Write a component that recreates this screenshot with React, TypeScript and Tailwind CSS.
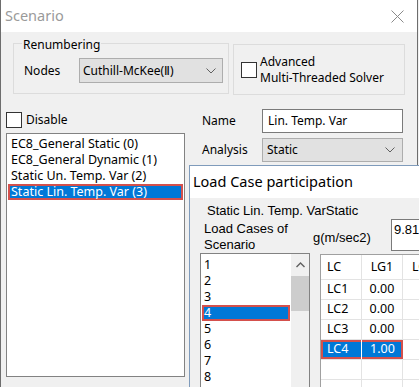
import React from 'react';

const Check = ({ className = '' }: { className?: string }) => (
  <div className={`w-[16px] h-[16px] bg-white border border-[#333333] shrink-0 ${className}`} />
);

const Chevron = () => (
  <svg width="10" height="6" viewBox="0 0 10 6" className="shrink-0">
    <path d="M0.5 0.5 L5 5 L9.5 0.5" fill="none" stroke="#606060" strokeWidth="1" />
  </svg>
);

const scenarios = [
  'EC8_General Static (0)',
  'EC8_General Dynamic (1)',
  'Static Un. Temp. Var (2)',
  'Static Lin. Temp. Var (3)',
];

const rows = [
  { lc: 'LC1', v: '0.00' },
  { lc: 'LC2', v: '0.00' },
  { lc: 'LC3', v: '0.00' },
  { lc: 'LC4', v: '1.00', sel: true },
];

export default function App() {
  return (
    <div className="w-[419px] h-[387px] overflow-hidden relative bg-[#f0f0f0] font-['Noto_Sans',sans-serif] text-[12px] text-black">
      {/* Scenario window */}
      <div className="w-[418px] h-[387px] border-x border-[#6d6d6d] bg-[#f0f0f0] flex flex-col">
        <div className="h-[32px] bg-white flex items-center justify-between pl-[4px] pr-[13px] shrink-0">
          <span className="text-[14.5px] text-[#9a9a9a]">Scenario</span>
          <svg width="13" height="13" viewBox="0 0 13 13">
            <path d="M0.5 0.5 L12.5 12.5 M12.5 0.5 L0.5 12.5" stroke="#8a8a8a" strokeWidth="1" />
          </svg>
        </div>

        {/* group boxes */}
        <div className="flex items-start pl-[12px] mt-[1px]">
          <fieldset className="w-[216px] min-w-0 h-[61px] border border-[#dcdcdc] pl-[10px] pr-[2px] shrink-0">
            <legend className="ml-[-2px] px-[1px] pt-[4px] leading-[16px]">Renumbering</legend>
            <div className="flex items-center mt-[5px]">
              <span className="w-[55px] shrink-0">Nodes</span>
              <div className="w-[144px] shrink-0 h-[25px] bg-[#e1e1e1] border border-[#adadad] flex items-center justify-between pl-[3px] pr-[6px]">
                <span>Cuthill-McKee(Ⅱ)</span>
                <Chevron />
              </div>
            </div>
          </fieldset>
          <div className="ml-[4px] mt-[11px] w-[172px] h-[51px] border border-[#dcdcdc] flex items-center pl-[7px] shrink-0">
            <Check />
            <div className="ml-[3px] leading-[16px]">
              <div>Advanced</div>
              <div>Multi-Threaded Solver</div>
            </div>
          </div>
        </div>

        {/* scenario list + name/analysis */}
        <div className="flex mt-[14px] pl-[5px]">
          <div className="w-[179px] shrink-0 flex flex-col pt-[3px]">
            <div className="flex items-center h-[16px]">
              <Check />
              <span className="ml-[4px]">Disable</span>
            </div>
            <div className="mt-[5px] h-[244px] bg-white border border-[#828282] pt-[2px] text-[12.5px]">
              {scenarios.map((s, i) =>
                i === 3 ? (
                  <div
                    key={s}
                    className="mx-[1px] h-[16px] leading-[16px] pl-[3px] bg-[#0078d7] text-white shadow-[inset_0_0_0_2px_#d4504c]"
                  >
                    {s}
                  </div>
                ) : (
                  <div key={s} className="h-[16px] leading-[16px] pl-[4px]">
                    {s}
                  </div>
                )
              )}
            </div>
          </div>
          <div className="ml-[17px] flex flex-col">
            <div className="flex items-center h-[24px]">
              <span className="w-[60px]">Name</span>
              <div className="w-[141px] h-[24px] bg-white border border-[#7a7a7a] flex items-center pl-[5px]">
                Lin. Temp. Var
              </div>
            </div>
            <div className="flex items-center h-[24px] mt-[5px]">
              <span className="w-[60px]">Analysis</span>
              <div className="w-[141px] h-[24px] bg-[#e1e1e1] border border-[#adadad] flex items-center justify-between pl-[4px] pr-[7px]">
                <span>Static</span>
                <Chevron />
              </div>
            </div>
          </div>
        </div>
      </div>

      {/* Load Case participation window (on top) */}
      <div className="absolute left-[189px] top-[165px] w-[270px] bottom-0 border-l border-t border-[#7f9bbb] bg-[#f0f0f0] flex flex-col">
        <div className="h-[32px] bg-white flex items-center pl-[3px] text-[14.5px] shrink-0">Load Case participation</div>
        <div className="font-['Liberation_Sans',Arial,sans-serif] text-[13px]">
          <div className="pl-[17px] pt-[5px] h-[21px] leading-[16px]">Static Lin. Temp. VarStatic</div>
          <div className="flex h-[34px]">
            <div className="ml-[14px] w-[109px] shrink-0 leading-[16px] pt-[2px]">
              <div>Load Cases of</div>
              <div>Scenario</div>
            </div>
            <div className="w-[78px] shrink-0 pt-[11px] leading-[16px]">g(m/sec2)</div>
            <div className="flex-1 h-[32px] bg-white border border-[#7a7a7a] pl-[2px] pt-[2px] leading-[16px]">9.81</div>
          </div>
        </div>
        <div className="flex flex-1 min-h-0 text-[12.5px]">
          <div className="ml-[10px] w-[110px] shrink-0 bg-white border border-[#828282] border-b-0 flex">
            <div className="flex-1 pt-[3px]">
              {[1, 2, 3, 4, 5, 6, 7, 8].map((n) =>
                n === 4 ? (
                  <div
                    key={n}
                    className="mx-[1px] h-[16px] leading-[16px] pl-[2px] bg-[#0078d7] text-white shadow-[inset_0_0_0_2px_#d4504c]"
                  >
                    {n}
                  </div>
                ) : (
                  <div key={n} className="h-[16px] leading-[16px] pl-[3px]">
                    {n}
                  </div>
                )
              )}
            </div>
            <div className="w-[18px] bg-[#f0f0f0] flex flex-col items-center">
              <div className="h-[22px] flex items-center justify-center">
                <svg width="9" height="6" viewBox="0 0 9 6">
                  <path d="M0.5 5 L4.5 1 L8.5 5" fill="none" stroke="#606060" strokeWidth="1.4" />
                </svg>
              </div>
              <div className="w-full h-[35px] bg-[#cdcdcd]" />
            </div>
          </div>
          <div className="ml-[10px] flex-1 mt-[1px] bg-white border border-[#a0a0a0] border-b-0 border-r-0">
            <div className="flex h-[25px] border-b border-[#e3e3e3] items-center">
              <div className="w-[41px] h-full border-r border-[#e3e3e3] pl-[6px] flex items-center">LC</div>
              <div className="w-[41px] h-full border-r border-[#e3e3e3] flex items-center justify-center">LG1</div>
              <div className="flex-1 pl-[9px]">LG2</div>
            </div>
            {rows.map((r) => (
              <div key={r.lc} className="flex h-[20px] border-b border-[#e3e3e3]">
                {r.sel ? (
                  <div className="flex bg-[#0078d7] text-white shadow-[inset_0_0_0_2px_#d4504c] pl-[2px]">
                    <div className="w-[39px] border-r border-white pl-[4px] flex items-center">{r.lc}</div>
                    <div className="w-[41px] flex items-center justify-center">{r.v}</div>
                  </div>
                ) : (
                  <>
                    <div className="w-[41px] border-r border-[#e3e3e3] pl-[6px] flex items-center">{r.lc}</div>
                    <div className="w-[41px] border-r border-[#e3e3e3] flex items-center justify-center">{r.v}</div>
                  </>
                )}
                <div className="flex-1" />
              </div>
            ))}
            {[0, 1].map((k) => (
              <div key={k} className="flex h-[20px] border-b border-[#e3e3e3]">
                <div className="w-[41px] border-r border-[#e3e3e3]" />
                <div className="w-[41px] border-r border-[#e3e3e3]" />
              </div>
            ))}
          </div>
        </div>
      </div>
    </div>
  );
}
